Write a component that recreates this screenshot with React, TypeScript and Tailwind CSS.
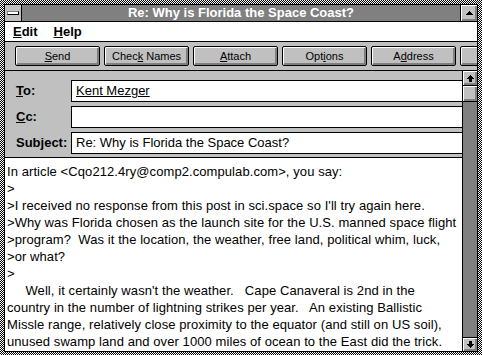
import React from "react";

const bevel = "shadow-[inset_1px_1px_0_#fff,inset_-2px_-2px_0_#808080]";

function UpArrow() {
  return (
    <svg width="7" height="7" viewBox="0 0 7 7" shapeRendering="crispEdges">
      <path d="M3.5 0 L7 4 H5 V7 H2 V4 H0 Z" fill="#000" />
    </svg>
  );
}

function DownArrow() {
  return (
    <svg width="7" height="7" viewBox="0 0 7 7" shapeRendering="crispEdges">
      <path d="M3.5 7 L7 3 H5 V0 H2 V3 H0 Z" fill="#000" />
    </svg>
  );
}

function ToolButton({ children }: { children: React.ReactNode }) {
  return (
    <div
      className={`w-[85px] h-[20px] shrink-0 flex items-center justify-center border border-black rounded-[2px] bg-[#c0c0c0] text-[11px] text-black ${bevel}`}
    >
      <span>{children}</span>
    </div>
  );
}

function Field({ label, value, link }: { label: React.ReactNode; value?: string; link?: boolean }) {
  return (
    <div className="flex items-center h-[22px]">
      <div className="w-[55px] shrink-0 text-[13px] font-bold">{label}</div>
      <div className="flex-1 h-full bg-white border border-r-0 border-black flex items-center pl-[4px] text-[13px]">
        {link ? <span className="underline">{value}</span> : value}
      </div>
    </div>
  );
}

const body = [
  "In article <Cqo212.4ry@comp2.compulab.com>, you say:",
  ">",
  ">I received no response from this post in sci.space so I'll try again here.",
  ">Why was Florida chosen as the launch site for the U.S. manned space flight",
  ">program?  Was it the location, the weather, free land, political whim, luck,",
  ">or what?",
  ">",
  "     Well, it certainly wasn't the weather.   Cape Canaveral is 2nd in the",
  "country in the number of lightning strikes per year.   An existing Ballistic",
  "Missle range, relatively close proximity to the equator (and still on US soil),",
  "unused swamp land and over 1000 miles of ocean to the East did the trick.",
];

export default function App() {
  return (
    <div className="w-[482px] h-[355px] pt-[4px] px-[4px] pb-[3px] bg-[image:repeating-conic-gradient(#000_0_25%,#fff_0_50%)] bg-[length:2px_2px] font-['Liberation_Sans',Arial,sans-serif] text-black overflow-hidden">
      <div className="h-full border border-black flex flex-col bg-[#c0c0c0] overflow-hidden">
        {/* title bar */}
        <div className="h-[17px] shrink-0 flex border-b border-black bg-[#808080]">
          <div className="w-[17px] border-r border-black bg-[#c0c0c0] flex items-center justify-center">
            <div className="w-[12px] h-[4px] bg-white border border-black border-t-[#808080] border-l-[#808080]" />
          </div>
          <div className="flex-1 flex items-center justify-center text-white font-bold text-[13px]">
            Re: Why is Florida the Space Coast?
          </div>
          <div className={`w-[17px] border-l border-black bg-[#c0c0c0] flex items-center justify-center ${bevel}`}>
            <svg width="7" height="4" viewBox="0 0 7 4" shapeRendering="crispEdges">
              <path d="M0 4 L3.5 0 L7 4 Z" fill="#000" />
            </svg>
          </div>
        </div>

        {/* menu */}
        <div className="h-[20px] shrink-0 flex items-center gap-[16px] pl-[8px] bg-white border-b border-black text-[13px] font-bold">
          <span>
            <u>E</u>dit
          </span>
          <span>
            <u>H</u>elp
          </span>
        </div>

        {/* toolbar */}
        <div className="h-[29px] shrink-0 flex items-center gap-[4px] pl-[10px] border-b border-black overflow-hidden">
          <ToolButton>
            <u>S</u>end
          </ToolButton>
          <ToolButton>
            Chec<u>k</u>{" "}Names
          </ToolButton>
          <ToolButton>
            <u>A</u>ttach
          </ToolButton>
          <ToolButton>
            Opt<u>i</u>ons
          </ToolButton>
          <ToolButton>
            A<u>d</u>dress
          </ToolButton>
          <ToolButton>{""}</ToolButton>
        </div>

        {/* main */}
        <div className="flex-1 flex min-h-0">
          <div className="flex-1 flex flex-col min-w-0">
            <div className="h-[87px] shrink-0 border-b border-black pt-[9px] pl-[11px] flex flex-col gap-[4px]">
              <Field
                label={
                  <>
                    <u>T</u>o:
                  </>
                }
                value="Kent Mezger"
                link
              />
              <Field
                label={
                  <>
                    <u>C</u>c:
                  </>
                }
              />
              <Field label="Subject:" value="Re: Why is Florida the Space Coast?" />
            </div>
            <div className="flex-1 bg-white pt-[5px] pl-[2px] text-[13px] leading-[17px] tracking-[0.08px] whitespace-pre overflow-hidden">
              {body.map((l, i) => (
                <div key={i}>{l}</div>
              ))}
            </div>
          </div>

          {/* scrollbar */}
          <div className="w-[15px] shrink-0 border-l border-black flex flex-col bg-[#808080]">
            <div className={`h-[15px] shrink-0 border-b border-black bg-[#c0c0c0] flex items-center justify-center ${bevel}`}>
              <UpArrow />
            </div>
            <div className={`h-[16px] shrink-0 border-b border-black bg-[#c0c0c0] ${bevel}`} />
            <div className="flex-1" />
            <div className={`h-[14px] shrink-0 border-t border-black bg-[#c0c0c0] flex items-center justify-center ${bevel}`}>
              <DownArrow />
            </div>
          </div>
        </div>
      </div>
    </div>
  );
}
